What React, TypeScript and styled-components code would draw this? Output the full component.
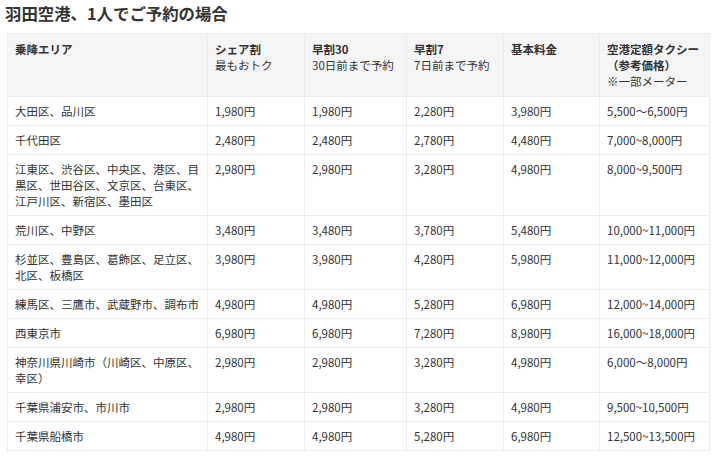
import React from "react";
import styled, { createGlobalStyle } from "styled-components";

const Global = createGlobalStyle`
  html, body { margin: 0; padding: 0; background: #ffffff; }
  body {
    font-family: "Noto Sans CJK JP", "Noto Sans", sans-serif;
    color: #333333;
  }
`;

const Page = styled.div`
  padding: 2px 11px 0 5px;
  display: flex;
  flex-direction: column;
  gap: 9px;
`;

const Title = styled.h2`
  margin: 0;
  font-size: 16.4px;
  line-height: 22px;
  font-weight: 700;
  color: #333333;
`;

const Table = styled.table`
  margin-left: 2px;
  width: 702px;
  table-layout: fixed;
  border-collapse: collapse;
  font-size: 11.5px;
  line-height: 16px;
`;

const HeadCell = styled.th`
  background: #f5f5f5;
  border: 1px solid #ececec;
  padding: 7px 7px 7px;
  text-align: left;
  vertical-align: top;
  font-weight: 400;
  color: #333333;
`;

const Strong = styled.span`
  display: block;
  font-weight: 700;
`;

const Cell = styled.td`
  border: 1px solid #ececec;
  padding: 6px 7px;
  vertical-align: top;
  color: #333333;
`;

const widths = [200, 97, 102, 97, 96, 110];

const rows: string[][] = [
  ["大田区、品川区", "1,980円", "1,980円", "2,280円", "3,980円", "5,500〜6,500円"],
  ["千代田区", "2,480円", "2,480円", "2,780円", "4,480円", "7,000~8,000円"],
  ["江東区、渋谷区、中央区、港区、目黒区、世田谷区、文京区、台東区、江戸川区、新宿区、墨田区", "2,980円", "2,980円", "3,280円", "4,980円", "8,000~9,500円"],
  ["荒川区、中野区", "3,480円", "3,480円", "3,780円", "5,480円", "10,000~11,000円"],
  ["杉並区、豊島区、葛飾区、足立区、北区、板橋区", "3,980円", "3,980円", "4,280円", "5,980円", "11,000~12,000円"],
  ["練馬区、三鷹市、武蔵野市、調布市", "4,980円", "4,980円", "5,280円", "6,980円", "12,000~14,000円"],
  ["西東京市", "6,980円", "6,980円", "7,280円", "8,980円", "16,000~18,000円"],
  ["神奈川県川崎市（川崎区、中原区、幸区）", "2,980円", "2,980円", "3,280円", "4,980円", "6,000〜8,000円"],
  ["千葉県浦安市、市川市", "2,980円", "2,980円", "3,280円", "4,980円", "9,500~10,500円"],
  ["千葉県船橋市", "4,980円", "4,980円", "5,280円", "6,980円", "12,500~13,500円"],
];

export default function App() {
  return (
    <>
      <Global />
      <Page>
        <Title>羽田空港、1人でご予約の場合</Title>
        <Table>
          <colgroup>
            {widths.map((w, i) => (
              <col key={i} style={{ width: w }} />
            ))}
          </colgroup>
          <thead>
            <tr>
              <HeadCell><Strong>乗降エリア</Strong></HeadCell>
              <HeadCell><Strong>シェア割</Strong>最もおトク</HeadCell>
              <HeadCell><Strong>早割30</Strong>30日前まで予約</HeadCell>
              <HeadCell><Strong>早割7</Strong>7日前まで予約</HeadCell>
              <HeadCell><Strong>基本料金</Strong></HeadCell>
              <HeadCell>
                <Strong>空港定額タクシー</Strong>
                <Strong>（参考価格）</Strong>
                ※一部メーター
              </HeadCell>
            </tr>
          </thead>
          <tbody>
            {rows.map((r, i) => (
              <tr key={i}>
                {r.map((c, j) => (
                  <Cell key={j}>{c}</Cell>
                ))}
              </tr>
            ))}
          </tbody>
        </Table>
      </Page>
    </>
  );
}
